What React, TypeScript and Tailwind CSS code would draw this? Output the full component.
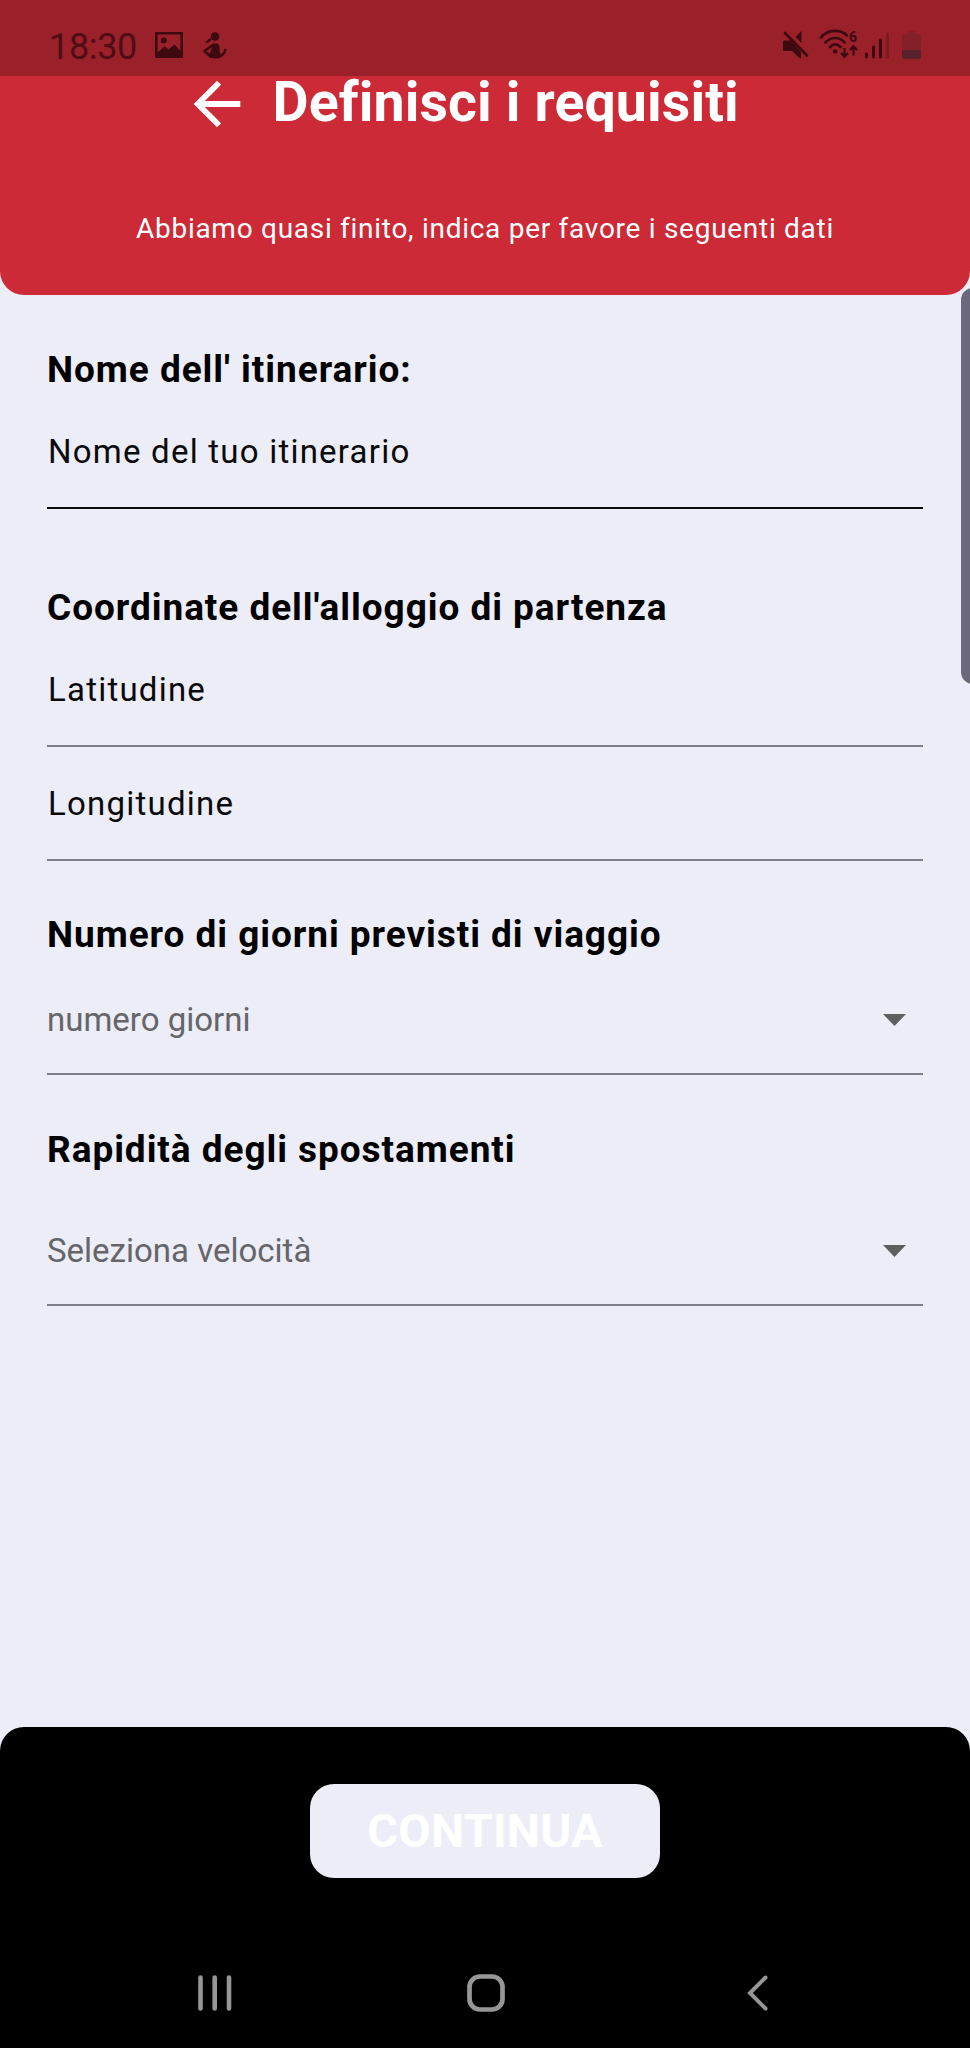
import type { ReactNode } from 'react';

function StatusBar() {
  return (
    <div className="flex h-[76px] items-start justify-between bg-[#9a2029] pl-[49px] pr-[48px] text-[#3d0a10]">
      <div className="flex items-start">
        <span className="mt-[27px] w-[106px] text-[36px] leading-10 tracking-[-0.350px] text-[#4f0d14]">18:30</span>
        <svg className="mt-[32px]" width="28" height="27" viewBox="0 0 28 27">
          <path fill="currentColor" fillRule="evenodd" d="M1 0h26q1 0 1 1v24q0 1-1 1H1q-1 0-1-1V1q0-1 1-1zM2.600 2.600V20.500L9.500 14.500l4 3 6-5 5.900 6.500V2.600z" />
          <circle cx="8.800" cy="8.500" r="3" fill="currentColor" />
        </svg>
        <svg className="ml-[19px] mt-[32px]" width="26" height="28" viewBox="0 0 26 28">
          <g fill="currentColor">
            <circle cx="13" cy="4.500" r="4.300" />
            <path d="M9.500 6C6.500 6.500 4 8.500 3.500 11.500c2-.3 4-1.300 5.500-3.200z" />
            <path d="M11 11.500h5c1.500 2 1.800 5.500 1.500 8l1.500 3-1.500 3.500C14 27 9 26.500 6.500 24l3-7z" />
          </g>
          <path fill="none" stroke="currentColor" strokeWidth="2.600" strokeLinecap="round" strokeLinejoin="round" d="M10.800 13 2.500 19 8.500 24.500M16 25C19.500 24.500 22.500 21.500 23.200 18" />
        </svg>
      </div>
      <div className="mt-[29px] flex items-start">
        <svg width="26" height="30" viewBox="0 0 26 30">
          <path fill="currentColor" d="M1 11.500h6.500L18 23v6.500h-1L9 22H1q-1 0-1-1v-8.500q0-1 1-1z" />
          <path fill="currentColor" d="M18.500 2v12l-6-6z" />
          <path stroke="currentColor" strokeWidth="2.600" strokeLinecap="round" d="m2 4 22 22.500" />
        </svg>
        <svg className="ml-[10px]" width="39" height="30" viewBox="0 0 39 30">
          <g fill="none" stroke="currentColor" strokeWidth="2.700" strokeLinecap="round">
            <path d="M2 8.500C9 0 21.500 0 28 6.500" />
            <path d="M6.500 13.500c5.500-6 14-6 19 0" />
            <path d="M11 18c3-3.500 7.500-3.500 10.500 0" />
          </g>
          <circle cx="16.200" cy="22.500" r="2.300" fill="currentColor" />
          <g fill="none" stroke="currentColor" strokeWidth="2.300">
            <path d="M25.500 19v9m-3.500-4 3.500 3.800L29 24" />
            <path d="M34.500 26.500v-9M31 21l3.500-3.800L38 21" />
          </g>
          <text x="30" y="12.500" fontSize="14" fontWeight="700" fontFamily="Roboto, sans-serif" fill="currentColor">6</text>
        </svg>
        <svg className="ml-[6px]" width="26" height="30" viewBox="0 0 26 30">
          <g stroke="currentColor" strokeWidth="3" strokeLinecap="round">
            <path d="M2.500 25v3M9.500 18v10M16.500 11v17" />
            <path d="M23.500 5v23" opacity=".3" />
          </g>
        </svg>
        <svg className="ml-[12px]" width="20" height="30" viewBox="0 0 20 30">
          <path fill="#85202b" d="M5.500 2h8v3H17q2 0 2 2v14H0V7q0-2 2-2h3.500z" />
          <path fill="#58232b" d="M0 21h19v7q0 2-2 2H2q-2 0-2-2z" />
        </svg>
      </div>
    </div>
  );
}

function Label({ children, className }: { children: ReactNode; className: string }) {
  return <h2 className={`text-[37px] leading-[44px] font-bold tracking-[0.940px] text-black ${className}`}>{children}</h2>;
}

function Field({ text, className }: { text: string; className: string }) {
  return (
    <div className={`border-b-2 pb-[35px] pl-px text-[33px] leading-10 tracking-[1.220px] text-[#0a0a0c] ${className}`}>{text}</div>
  );
}

function Select({ text, className }: { text: string; className: string }) {
  return (
    <div className={`flex items-center justify-between border-b-2 border-[#7e7d88] pr-[17px] text-[33px] leading-10 text-[#65656a] ${className}`}>
      <span>{text}</span>
      <svg width="23" height="12" viewBox="0 0 23 12">
        <path d="M0 0h23L11.500 12z" fill="#5f5f60" />
      </svg>
    </div>
  );
}

export default function App() {
  return (
    <div className="relative flex h-[2048px] w-[970px] flex-col overflow-hidden bg-[#ecedf7] font-['Roboto',sans-serif]">
      <header className="h-[294.500px] shrink-0 overflow-hidden rounded-b-[24px] bg-[#cb2a36] text-white">
        <StatusBar />
        <div className="flex h-14 items-center gap-[21px] pl-[181.500px]">
          <svg width="70" height="70" viewBox="0 0 24 24" className="shrink-0">
            <path fill="currentColor" d="M20 11H7.830l5.590-5.590L12 4l-8 8 8 8 1.410-1.410L7.830 13H20v-2z" />
          </svg>
          <h1 className="pb-0.5 text-[55.500px] leading-[64px] font-bold tracking-[0.100px] [font-variant-ligatures:none]">
            Definisci i requisiti
          </h1>
        </div>
        <p className="mt-[79px] text-center text-[28px] leading-9 tracking-[0.720px]">
          Abbiamo quasi finito, indica per favore i seguenti dati
        </p>
      </header>

      <main className="flex flex-1 flex-col px-[47px] pt-[53.500px]">
        <Label className="">Nome dell' itinerario:</Label>
        <Field text="Nome del tuo itinerario" className="mt-[40px] border-[#0b0b0e]" />
        <Label className="mt-[77px]">Coordinate dell'alloggio di partenza</Label>
        <Field text="Latitudine" className="mt-[40px] border-[#7e7d88]" />
        <Field text="Longitudine" className="mt-[37px] border-[#7e7d88]" />
        <Label className="mt-[52px]">Numero di giorni previsti di viaggio</Label>
        <Select text="numero giorni" className="mt-[43px] pb-[33px]" />
        <Label className="mt-[53px]">Rapidità degli spostamenti</Label>
        <Select text="Seleziona velocità" className="mt-[59px] pb-[33px]" />
      </main>

      <footer className="flex h-[321px] shrink-0 flex-col items-center rounded-t-[24px] bg-black pt-[57px]">
        <button className="h-[94px] w-[350px] rounded-[24px] bg-[#ecedf7] text-[47px] leading-[94px] font-bold tracking-[0.200px] text-white">
          CONTINUA
        </button>
        <nav className="mt-[96px] flex w-full items-center pl-[198px]">
          <svg width="34" height="38" viewBox="0 0 34 38">
            <path d="M2.500 3.500v31M16.700 3.500v31M31 3.500v31" stroke="#969696" strokeWidth="4.600" strokeLinecap="round" />
          </svg>
          <svg className="ml-[235px]" width="38" height="38" viewBox="0 0 38 38">
            <rect x="2.500" y="2.500" width="33" height="33" rx="10.500" fill="none" stroke="#969696" strokeWidth="4.700" />
          </svg>
          <svg className="ml-[241px]" width="24" height="38" viewBox="0 0 24 38">
            <path d="M19.500 3.500 4 19l15.500 15.500" fill="none" stroke="#969696" strokeWidth="4" strokeLinecap="round" />
          </svg>
        </nav>
      </footer>

      <div className="absolute top-[288px] -right-[15px] h-[396px] w-[24px] rounded-[12px] bg-[#6b687d]" />
    </div>
  );
}
